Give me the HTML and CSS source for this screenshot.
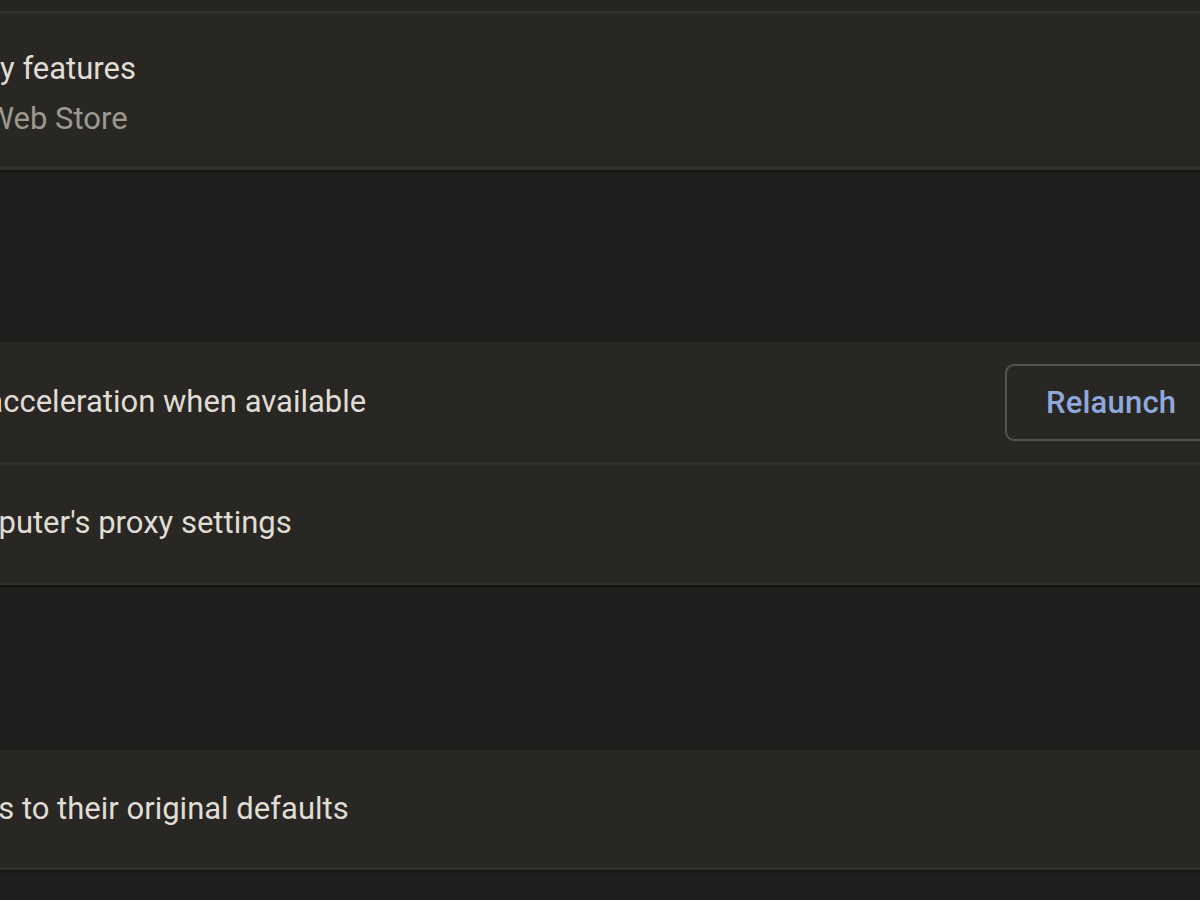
FILE: index.html
```html
<!DOCTYPE html>
<html lang="en">
<head>
<meta charset="utf-8">
<title>Settings</title>
<link rel="stylesheet" href="styles.css">
</head>
<body>
<div class="page">
  <section class="card card-first">
    <div class="row row-stub"></div>
    <div class="row row-tall">
      <div class="text">
        <div class="primary primary-long">Get more accessibility features</div>
        <div class="secondary">Open Chrome Web Store</div>
      </div>
    </div>
  </section>

  <div class="gap gap-a"></div>

  <section class="card card-system">
    <div class="row row-hw">
      <div class="text">
        <div class="primary">Use hardware acceleration when available</div>
      </div>
      <button class="btn">Relaunch</button>
    </div>
    <div class="row row-proxy">
      <div class="text">
        <div class="primary">Open your computer's proxy settings</div>
      </div>
    </div>
  </section>

  <div class="gap gap-b"></div>

  <section class="card card-reset">
    <div class="row row-reset">
      <div class="text">
        <div class="primary">Restore settings to their original defaults</div>
      </div>
    </div>
  </section>
</div>
</body>
</html>
```

FILE: styles.css
```css
html, body {
  margin: 0;
  padding: 0;
  width: 1200px;
  height: 900px;
  overflow: hidden;
  background: #1f1f1d;
}

.page {
  width: 1420px;
  margin-left: -210px;
  font-family: Roboto, "Liberation Sans", sans-serif;
  font-size: 31px;
  color: #e0ddd5;
}

.card {
  background: #282723;
  border-bottom: 4px solid #302f2b;
  box-shadow: 0 2px 2px rgba(0, 0, 0, 0.35);
}

.row {
  display: flex;
  align-items: center;
  box-sizing: border-box;
}

.row + .row {
  border-top: 3px solid #312f2b;
}

.row-stub {
  height: 11px;
  background: #262521;
}

.row-tall {
  height: 152px;
  padding-top: 12px;
}

.card-first {
  height: 170px;
  box-sizing: border-box;
}

.text {
  flex: 1;
  min-width: 0;
}

.primary {
  line-height: 48px;
  white-space: nowrap;
}

.primary-long {
  margin-left: -80px;
}

.secondary {
  line-height: 52px;
  color: #9c9991;
  white-space: nowrap;
}

.gap-a { height: 172px; }
.gap-b { height: 165px; }

.card-system {
  height: 243px;
  box-sizing: border-box;
  border-bottom-width: 2px;
}

.row-hw { height: 120px; }
.row-proxy { height: 118px; }

.btn {
  margin-right: -10px;
  margin-left: auto;
  width: 215px;
  height: 77px;
  border: 2px solid #55534e;
  border-radius: 9px;
  background: transparent;
  color: #8fa9dc;
  font-family: Roboto, "Liberation Sans", sans-serif;
  font-size: 31px;
  font-weight: 500;
  letter-spacing: 0.2px;
  text-align: left;
  padding: 0 0 0 39px;
  flex: none;
}

.card-reset {
  height: 120px;
  box-sizing: border-box;
  border-bottom-width: 3px;
}

.row-reset { height: 117px; }
```
